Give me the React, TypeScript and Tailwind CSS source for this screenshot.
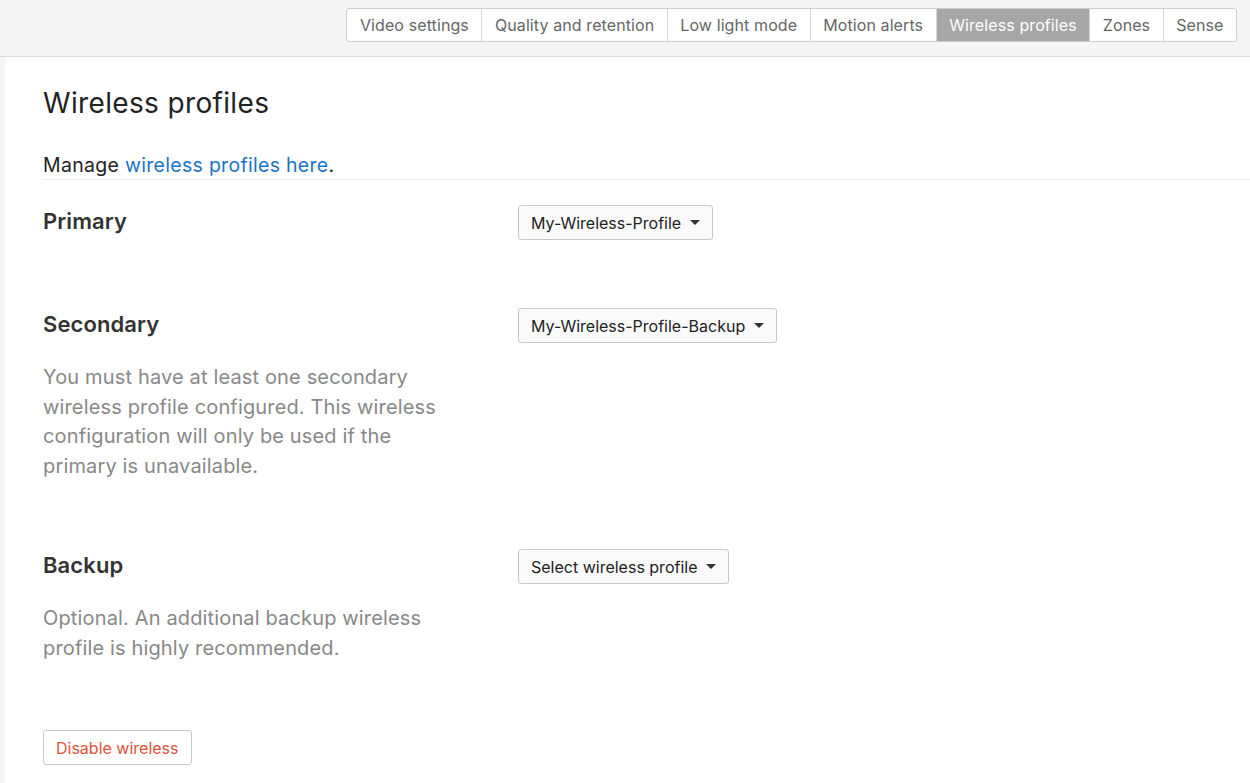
const tabs = [
  'Video settings',
  'Quality and retention',
  'Low light mode',
  'Motion alerts',
  'Wireless profiles',
  'Zones',
  'Sense',
];

const Caret = () => (
  <span className="ml-[9px] inline-block w-0 h-0 border-l-[5px] border-r-[5px] border-t-[5px] border-l-transparent border-r-transparent border-t-[#333]" />
);

const Dropdown = ({ label }: { label: string }) => (
  <button className="h-[35px] px-[12px] flex items-center bg-[#fafafa] border border-[#c8c8c8] rounded-[3px] text-[16px] text-[#222]">
    {label}
    <Caret />
  </button>
);

const Row = ({ title, desc, value }: any) => (
  <div className="flex">
    <div className="w-[475px] shrink-0">
      <h3 className="text-[22px] tracking-[0.1px] font-semibold text-[#333] leading-[30px] pt-[1px]">{title}</h3>
      {desc && (
        <p className="mt-[24px] max-w-[400px] text-[20px] tracking-[0.15px] leading-[29.5px] text-[#888]">{desc}</p>
      )}
    </div>
    <Dropdown label={value} />
  </div>
);

export default function App() {
  return (
    <div className="w-[1250px] h-[783px] overflow-hidden bg-[#f5f5f5] font-['Inter',sans-serif] flex flex-col">
      <div className="h-[57px] shrink-0 border-b border-[#dcdcdc] flex justify-end items-start pt-[8px] pr-[13px]">
        <div className="flex h-[34px] border border-[#cfcfcf] rounded-[3px] bg-white overflow-hidden">
          {tabs.map((t, i) => (
            <div
              key={t}
              className={
                'px-[12.5px] flex items-center text-[16px] tracking-[0.1px] ' +
                (i > 0 ? 'border-l border-[#d6d6d6] ' : '') +
                (t === 'Wireless profiles' ? 'bg-[#a6a6a6] text-white' : 'text-[#666]')
              }
            >
              {t}
            </div>
          ))}
        </div>
      </div>
      <div className="flex-1 ml-[5px] bg-white">
        <div className="pl-[38px] pt-[26px]">
          <h1 className="text-[28px] tracking-[0.35px] text-[#222] leading-[40px]">Wireless profiles</h1>
          <p className="mt-[28px] text-[19.5px] tracking-[0.3px] text-[#222] leading-[28px]">
            Manage <a className="text-[#1a73c8]">wireless profiles here</a>.
          </p>
        </div>
        <div className="ml-[38px] border-t border-[#eeeeee]" />
        <div className="pl-[38px] pt-[25px] flex flex-col">
          <Row title="Primary" value="My-Wireless-Profile" />
          <div className="mt-[68px]">
            <Row
              title="Secondary"
              value="My-Wireless-Profile-Backup"
              desc="You must have at least one secondary wireless profile configured. This wireless configuration will only be used if the primary is unavailable."
            />
          </div>
          <div className="mt-[68px]">
            <Row
              title="Backup"
              value="Select wireless profile"
              desc="Optional. An additional backup wireless profile is highly recommended."
            />
          </div>
          <div className="mt-[67px]">
            <button className="h-[35px] px-[12px] border border-[#c8c8c8] rounded-[3px] bg-white text-[16px] text-[#e0533c]">
              Disable wireless
            </button>
          </div>
        </div>
      </div>
    </div>
  );
}
